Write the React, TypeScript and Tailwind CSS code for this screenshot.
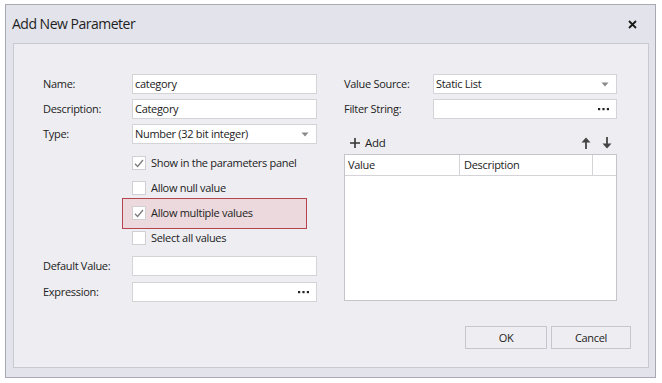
import { FC, ReactNode } from 'react';

const font = { fontFamily: '"Open Sans", "Noto Sans", sans-serif' };

const DropArrow: FC = () => (
    <svg width="8" height="5" viewBox="0 0 8 5" className="shrink-0">
        <path d="M0.5 0.5 L7.5 0.5 L4 4.5 Z" fill="#8a8a8a" />
    </svg>
);

const Dots: FC = () => (
    <svg width="11" height="3" viewBox="0 0 11 3" className="shrink-0">
        <rect x="0" y="0" width="2.2" height="2.2" fill="#222" />
        <rect x="4.4" y="0" width="2.2" height="2.2" fill="#222" />
        <rect x="8.8" y="0" width="2.2" height="2.2" fill="#222" />
    </svg>
);

const Check: FC<{ checked?: boolean }> = ({ checked }) => (
    <div className="w-[14px] h-[14px] bg-white border border-[#d0d0d4] flex items-center justify-center shrink-0">
        {checked && (
            <svg width="10" height="9" viewBox="0 0 10 9">
                <path d="M1 4.8 L3.6 7.5 L9 1" stroke="#7b7b7b" strokeWidth="1.3" fill="none" />
            </svg>
        )}
    </div>
);

interface FieldProps {
    label: string;
    children?: ReactNode;
    right?: ReactNode;
    labelW: string;
    inputW: string;
    className?: string;
}

const Field: FC<FieldProps> = ({ label, children, right, labelW, inputW, className }) => (
    <div className={`flex items-center h-[20px] ${className ?? ''}`}>
        <span className={`${labelW} text-[#222]`}>{label}</span>
        <div className={`${inputW} h-[20px] bg-white border border-[#d4d4d8] flex items-center pl-[2px] pr-[7px]`}>
            <span className="flex-1 text-[#222] whitespace-nowrap">{children}</span>
            {right}
        </div>
    </div>
);

const CheckRow: FC<{ label: string; checked?: boolean; className?: string; highlight?: boolean }> = ({
    label,
    checked,
    className,
    highlight,
}) => (
    <div className={`relative flex items-center h-[20px] pl-[89px] ${className ?? ''}`}>
        {highlight && (
            <div className="absolute left-[79px] top-[-5px] w-[185px] h-[31px] bg-[#ecd9dd] border border-[#b5444f]" />
        )}
        <div className="relative flex items-center gap-[5px]">
            <Check checked={checked} />
            <span className="text-[#222]">{label}</span>
        </div>
    </div>
);

const App: FC = () => {
    return (
        <div className="w-[662px] h-[383px] bg-white pt-[4px] pl-[5px] text-[11px] leading-[16px]" style={font}>
            <div className="w-[651px] h-[374px] bg-[#e3e3eb] border border-[#a9a9b4] flex flex-col">
                <div className="h-[38px] flex items-center justify-between pl-[6px] pr-[18px]">
                    <span className="text-[14px] text-[#1e1e1e] tracking-[-0.5px]">Add New Parameter</span>
                    <svg width="9" height="9" viewBox="0 0 9 9">
                        <path d="M1 1 L8 8 M8 1 L1 8" stroke="#1a1a1a" strokeWidth="1.8" />
                    </svg>
                </div>
                <div className="ml-[7px] w-[636px] h-[325px] bg-[#eeeef2] border border-[#c9c9d1] flex flex-col tracking-[-0.3px]">
                    <div className="flex pt-[30px] pl-[29px]">
                        <div className="flex flex-col w-[274px]">
                            <Field label="Name:" labelW="w-[89px]" inputW="w-[185px]">
                                category
                            </Field>
                            <Field label="Description:" labelW="w-[89px]" inputW="w-[185px]" className="mt-[5px]">
                                Category
                            </Field>
                            <Field
                                label="Type:"
                                labelW="w-[89px]"
                                inputW="w-[185px]"
                                className="mt-[5px]"
                                right={<DropArrow />}
                            >
                                Number (32 bit integer)
                            </Field>
                            <CheckRow label="Show in the parameters panel" checked className="mt-[9px]" />
                            <CheckRow label="Allow null value" className="mt-[5px]" />
                            <CheckRow label="Allow multiple values" checked highlight className="mt-[5px]" />
                            <CheckRow label="Select all values" className="mt-[5px]" />
                            <Field label="Default Value:" labelW="w-[89px]" inputW="w-[185px]" className="mt-[8px]" />
                            <Field
                                label="Expression:"
                                labelW="w-[89px]"
                                inputW="w-[185px]"
                                className="mt-[6px]"
                                right={<Dots />}
                            />
                        </div>
                        <div className="flex flex-col w-[273px] ml-[27px]">
                            <Field label="Value Source:" labelW="w-[89px]" inputW="w-[184px]" right={<DropArrow />}>
                                Static List
                            </Field>
                            <Field
                                label="Filter String:"
                                labelW="w-[89px]"
                                inputW="w-[184px]"
                                className="mt-[5px]"
                                right={<Dots />}
                            />
                            <div className="flex items-center justify-between h-[20px] mt-[14px] pl-[6px] pr-[5px]">
                                <div className="flex items-center gap-[5px] text-[#222]">
                                    <svg width="10" height="10" viewBox="0 0 10 10">
                                        <path d="M5 0 V10 M0 5 H10" stroke="#333" strokeWidth="1.6" />
                                    </svg>
                                    <span className="text-[11.5px]">Add</span>
                                </div>
                                <div className="flex items-center gap-[11px]">
                                    <svg width="10" height="12" viewBox="0 0 10 12">
                                        <path d="M5 12 V4" stroke="#444" strokeWidth="1.8" />
                                        <path d="M0.5 5.5 L5 0.5 L9.5 5.5 Z" fill="#444" />
                                    </svg>
                                    <svg width="10" height="12" viewBox="0 0 10 12">
                                        <path d="M5 0 V8" stroke="#444" strokeWidth="1.8" />
                                        <path d="M0.5 6.5 L5 11.5 L9.5 6.5 Z" fill="#444" />
                                    </svg>
                                </div>
                            </div>
                            <div className="mt-[1px] h-[147px] bg-white border border-[#c4c4ca] flex flex-col">
                                <div className="flex h-[21px] border-b border-[#d4d4d8] text-[#222]">
                                    <div className="w-[115px] border-r border-[#d4d4d8] flex items-center pl-[3px]">
                                        Value
                                    </div>
                                    <div className="w-[133px] border-r border-[#d4d4d8] flex items-center pl-[4px]">
                                        Description
                                    </div>
                                    <div className="flex-1" />
                                </div>
                            </div>
                        </div>
                    </div>
                    <div className="flex justify-end gap-[4px] mt-[24px] pr-[17px]">
                        <button className="w-[82px] h-[23px] bg-[#eeeef2] border border-[#c6c6cc] text-[#222] pt-[1px]">
                            OK
                        </button>
                        <button className="w-[80px] h-[23px] bg-[#eeeef2] border border-[#c6c6cc] text-[#222] pt-[1px]">
                            Cancel
                        </button>
                    </div>
                </div>
            </div>
        </div>
    );
};

export default App;
